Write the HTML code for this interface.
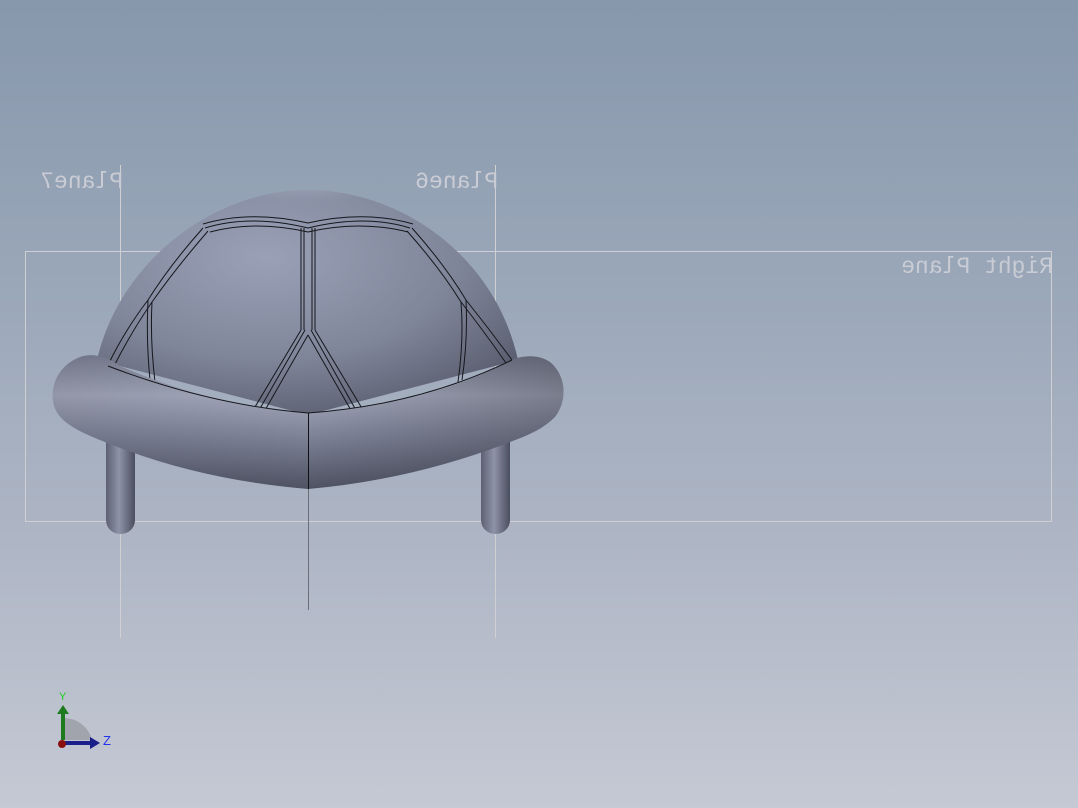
<!DOCTYPE html>
<html><head><meta charset="utf-8"><style>
html,body{margin:0;padding:0}
body{width:1078px;height:808px;overflow:hidden;background:linear-gradient(#8797ac 0%,#9aa7b9 35%,#b0b7c6 70%,#c5c9d4 100%)}
svg{position:absolute;left:0;top:0}
text{font-family:"Liberation Mono",monospace;font-size:23px;fill:#c9ccd4}
</style></head><body>
<svg width="1078" height="808" viewBox="0 0 1078 808">
<defs>
<radialGradient id="dome" cx="0.4" cy="0.3" r="0.75">
<stop offset="0" stop-color="#9aa0b6"/><stop offset="0.6" stop-color="#80869a"/><stop offset="1" stop-color="#5a5e70"/>
</radialGradient>
<radialGradient id="top" cx="0.5" cy="0" r="0.5">
<stop offset="0" stop-color="#b4b9cd"/><stop offset="1" stop-color="#9298ae" stop-opacity="0"/>
</radialGradient>
<clipPath id="dc"><path d="M97,360 C120,260 215,190 308,190 C400,190 495,255 518,360 L308,415 Z"/></clipPath>
<linearGradient id="rim" x1="0" y1="0" x2="0" y2="1">
<stop offset="0" stop-color="#7c8195"/><stop offset="0.3" stop-color="#a3a8bc"/><stop offset="0.6" stop-color="#7e8398"/><stop offset="1" stop-color="#4e5262"/>
</linearGradient>
<linearGradient id="rimh" x1="0" y1="0" x2="1" y2="0">
<stop offset="0" stop-color="#000" stop-opacity="0.1"/><stop offset="0.5" stop-color="#000" stop-opacity="0"/><stop offset="1" stop-color="#000" stop-opacity="0.25"/>
</linearGradient>
<linearGradient id="leg" x1="0" y1="0" x2="1" y2="0">
<stop offset="0" stop-color="#5c6072"/><stop offset="0.45" stop-color="#8e93a8"/><stop offset="1" stop-color="#4a4e5e"/>
</linearGradient>
</defs>
<rect x="25.5" y="251.5" width="1026" height="270" fill="none" stroke="#d0d0d2" stroke-width="1"/>
<line x1="120.5" y1="165" x2="120.5" y2="638" stroke="#d0d0d2"/>
<line x1="495.5" y1="165" x2="495.5" y2="638" stroke="#d0d0d2"/>
<g transform="scale(-1,1)">
<text x="-123" y="188">Plane7</text>
<text x="-498" y="188">Plane6</text>
<text x="-1053" y="273">Right Plane</text>
</g>
<rect x="106" y="420" width="29" height="114" rx="14" fill="url(#leg)"/>
<rect x="481" y="420" width="29" height="114" rx="14" fill="url(#leg)"/>
<path d="M97,360 C120,260 215,190 308,190 C400,190 495,255 518,360 L308,415 Z" fill="url(#dome)"/>
<ellipse cx="305" cy="205" rx="100" ry="30" fill="url(#top)" clip-path="url(#dc)"/>
<g fill="none" stroke="#15171c" stroke-width="1">
<path d="M205,228 Q250,214 308,228 Q365,214 410,228"/>
<path d="M203,224 Q250,210 308,223 Q365,210 413,224"/>
<path d="M210,232 Q255,220 308,232 Q360,220 408,232"/>
<path d="M301,228 V330 M304,228 V330 M312,228 V330 M315,228 V330"/>
<path d="M301,330 L252,412 M305,330 L258,412 M308,335 L264,412"/>
<path d="M315,330 L363,410 M311,330 L357,412 M308,335 L352,412"/>
<path d="M203,228 Q170,265 148,300 Q125,330 108,365"/>
<path d="M208,231 Q176,268 152,302 Q130,334 113,368"/>
<path d="M148,300 Q146,340 150,380 M152,302 Q150,340 155,382"/>
<path d="M412,228 Q445,265 466,300 Q490,330 512,360"/>
<path d="M407,231 Q440,268 461,302 Q486,334 506,363"/>
<path d="M466,300 Q468,340 462,380 M461,302 Q464,340 458,382"/>
</g>
<path id="r" d="M80,357 C95,352 108,358 120,366 Q210,405 308,413 Q420,405 500,366 C515,356 535,352 550,362 C566,375 568,400 555,417 C540,432 520,438 505,444 Q410,480 308,489 Q200,480 110,444 C90,436 68,428 58,414 C47,398 52,368 80,357 Z" fill="url(#rim)"/>
<path d="M80,357 C95,352 108,358 120,366 Q210,405 308,413 Q420,405 500,366 C515,356 535,352 550,362 C566,375 568,400 555,417 C540,432 520,438 505,444 Q410,480 308,489 Q200,480 110,444 C90,436 68,428 58,414 C47,398 52,368 80,357 Z" fill="url(#rimh)"/>
<path d="M108,366 Q210,405 308,413 Q420,405 512,360" fill="none" stroke="#15171c" stroke-width="1"/>
<line x1="308.5" y1="413" x2="308.5" y2="489" stroke="#111" stroke-width="1"/>
<line x1="308.5" y1="489" x2="308.5" y2="610" stroke="#6a6e78" stroke-width="1"/>
<path d="M63,740 L63,718 A29,29 0 0 1 92,740 Z" fill="#9a9ca4" opacity="0.8"/>
<rect x="61" y="712" width="4" height="28" fill="#1e7a1e"/>
<path d="M57,714 L63,705 L69,714 Z" fill="#1e7a1e"/>
<rect x="63" y="741" width="28" height="4" fill="#1a1f8a"/>
<path d="M90,737 L100,743 L90,749 Z" fill="#1a1f8a"/>
<circle cx="62" cy="744" r="4" fill="#8a1010"/>
<text x="59" y="700" style="font-family:'Liberation Sans',sans-serif;font-size:11px;fill:#22cc22">Y</text>
<text x="103" y="745" style="font-family:'Liberation Sans',sans-serif;font-size:13px;fill:#2233ee">Z</text>
</svg>
</body></html>
